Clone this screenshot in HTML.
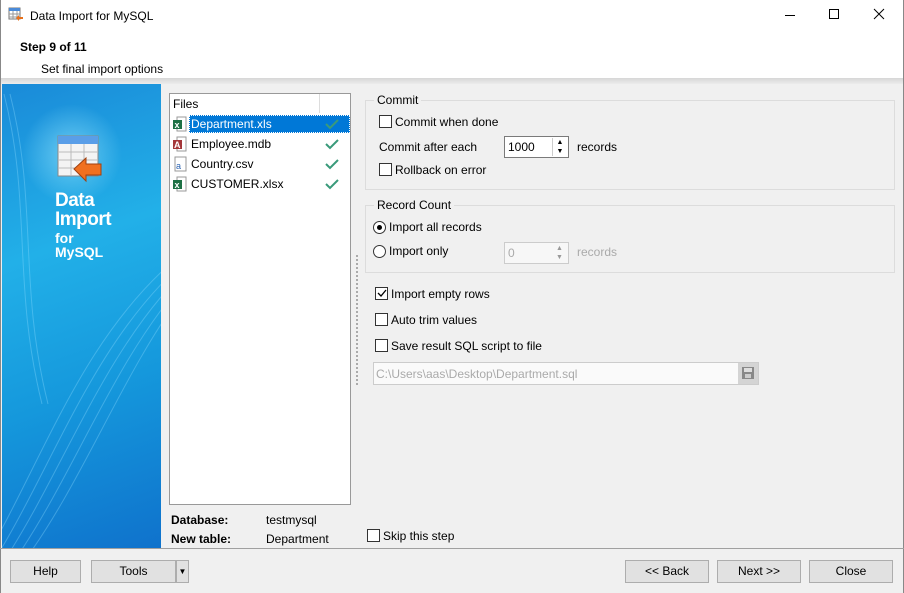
<!DOCTYPE html>
<html><head><style>
*{box-sizing:border-box;margin:0;padding:0}
body{width:904px;height:593px;overflow:hidden;background:#f0f0f0;font-family:"Liberation Sans",sans-serif;font-size:12px;color:#000;position:relative}
.a{position:absolute}
.cb{position:absolute;width:13px;height:13px;border:1px solid #333;background:#fff}
.rb{position:absolute;width:13px;height:13px;border:1px solid #333;border-radius:50%;background:#fff}
.btn{position:absolute;height:23px;border:1px solid #adadad;background:#e1e1e1;text-align:center;line-height:21px}
.grp{position:absolute;border:1px solid #dcdcdc}
.gl{position:absolute;background:#f0f0f0;padding:0 3px;top:-8px;left:8px}
</style></head><body>
<div class="a" style="left:0;top:0;width:904px;height:78px;background:#fff"></div>
<svg class="a" style="left:8px;top:7px" width="16" height="16"><rect x="1" y="1" width="11" height="11" fill="#fff" stroke="#777"/><rect x="1" y="1" width="11" height="3" fill="#4a8ad8"/><path d="M1 7h11M1 10h11M5 4v8M9 4v8" stroke="#999"/><path d="M8 11l3-3v2h4v2h-4v2z" fill="#e8701a"/></svg>
<div class="a" style="left:30px;top:9px;font-size:12px">Data Import for MySQL</div>
<div class="a" style="left:785px;top:15px;width:10px;height:1px;background:#000"></div>
<div class="a" style="left:829px;top:9px;width:10px;height:10px;border:1px solid #000"></div>
<svg class="a" style="left:873px;top:8px" width="12" height="12"><path d="M1 1l10 10M11 1L1 11" stroke="#000"/></svg>
<div class="a" style="left:20px;top:40px;font-weight:bold">Step 9 of 11</div>
<div class="a" style="left:41px;top:62px">Set final import options</div>
<div class="a" style="left:0;top:78px;width:904px;height:6px;background:linear-gradient(#d6d6d6,#ececec)"></div>
<div class="a" style="left:0;top:0;width:1px;height:593px;background:#888"></div>
<div class="a" style="left:903px;top:0;width:1px;height:593px;background:#888"></div>
<!-- banner -->
<div class="a" style="left:2px;top:84px;width:159px;height:464px;background:linear-gradient(160deg,#1a8ad8 0%,#22b0e8 35%,#1598dc 65%,#0f72cc 100%);overflow:hidden">
<div class="a" style="left:20px;top:20px;width:100px;height:100px;border-radius:50%;background:radial-gradient(closest-side,rgba(160,235,255,.6),rgba(160,235,255,0))"></div>
<svg width="159" height="464" style="position:absolute;left:0;top:0"><g fill="none" stroke="#8fdcff" stroke-opacity=".35"><path d="M-20 480C40 380 80 250 180 170"/><path d="M-10 480C50 385 90 260 180 180"/><path d="M0 480C60 390 100 270 180 190"/><path d="M10 480C70 395 110 280 180 200"/><path d="M20 480C80 400 120 290 180 210"/><path d="M2 10C30 120 10 200 40 320"/><path d="M8 10C36 120 16 200 46 320"/></g></svg>
<svg class="a" style="left:54px;top:50px" width="50" height="50"><rect x="2" y="2" width="40" height="40" fill="#f4f4f4" stroke="#888"/><rect x="2" y="2" width="40" height="8" fill="#5a9ee8"/><path d="M2 18h40M2 26h40M2 34h40M15 10v32M28 10v32" stroke="#bbb"/><path d="M18 35l12-11v6h15v11h-15v6z" fill="#f07020" stroke="#a04010"/></svg>
<div class="a" style="left:53px;top:107px;color:#fff;font-weight:bold;font-size:19px;line-height:19px;letter-spacing:-.5px">Data<br>Import</div>
<div class="a" style="left:53px;top:147px;color:#fff;font-weight:bold;font-size:14px;line-height:14px">for<br>MySQL</div>
</div>
<!-- files -->
<div class="a" style="left:169px;top:93px;width:182px;height:412px;background:#fff;border:1px solid #999"></div>
<div class="a" style="left:319px;top:94px;width:1px;height:19px;background:#ddd"></div>
<div class="a" style="left:173px;top:97px">Files</div>
<div class="a" style="left:189px;top:115px;width:161px;height:18px;background:#0078d7;outline:1px dotted #fff;outline-offset:-1px"></div>
<div class="a" style="left:191px;top:117px;color:#fff">Department.xls</div>
<div class="a" style="left:191px;top:137px">Employee.mdb</div>
<div class="a" style="left:191px;top:157px">Country.csv</div>
<div class="a" style="left:191px;top:177px">CUSTOMER.xlsx</div>
<svg class="a" style="left:172px;top:116px" width="16" height="80" font-family="Liberation Sans" font-size="9" font-weight="bold"><rect x="5" y="1" width="9" height="14" fill="#fff" stroke="#999"/><rect x="1" y="4" width="9" height="9" fill="#1e7145"/><text x="2.5" y="12" fill="#fff">x</text><rect x="5" y="21" width="9" height="14" fill="#fff" stroke="#999"/><rect x="1" y="24" width="9" height="9" fill="#a4373a"/><text x="2" y="32" fill="#fff">A</text><rect x="3" y="41" width="11" height="14" fill="#fff" stroke="#999"/><text x="4" y="53" fill="#2a62b0" font-weight="normal">a</text><rect x="5" y="61" width="9" height="14" fill="#fff" stroke="#999"/><rect x="1" y="64" width="9" height="9" fill="#1e7145"/><text x="2.5" y="72" fill="#fff">x</text></svg>
<svg class="a" style="left:324px;top:117px" width="16" height="80"><g fill="none" stroke="#3a9a7a" stroke-width="2"><path d="M2 7l4 4 8-8"/><path d="M2 27l4 4 8-8"/><path d="M2 47l4 4 8-8"/><path d="M2 67l4 4 8-8"/></g></svg>
<div class="a" style="left:171px;top:513px;font-weight:bold">Database:</div>
<div class="a" style="left:266px;top:513px">testmysql</div>
<div class="a" style="left:171px;top:532px;font-weight:bold">New table:</div>
<div class="a" style="left:266px;top:532px">Department</div>
<div class="cb" style="left:367px;top:529px"></div>
<div class="a" style="left:383px;top:529px">Skip this step</div>
<div class="a" style="left:356px;top:255px;width:2px;height:130px;border-left:2px dotted #aaa"></div>
<div class="grp" style="left:365px;top:100px;width:530px;height:90px"><div class="gl">Commit</div></div>
<div class="cb" style="left:379px;top:115px"></div><div class="a" style="left:395px;top:115px">Commit when done</div>
<div class="a" style="left:379px;top:140px">Commit after each</div>
<div class="a" style="left:504px;top:136px;width:65px;height:22px;border:1px solid #7a7a7a;background:#fff;padding:3px 0 0 3px">1000</div>
<div class="a" style="left:552px;top:138px;width:15px;height:18px;border-left:1px solid #ccc;font-size:7px;text-align:center;line-height:9px">▲<br>▼</div>
<div class="a" style="left:577px;top:140px">records</div>
<div class="cb" style="left:379px;top:163px"></div><div class="a" style="left:395px;top:163px">Rollback on error</div>
<div class="grp" style="left:365px;top:205px;width:530px;height:68px"><div class="gl">Record Count</div></div>
<div class="rb" style="left:373px;top:221px"></div><div class="a" style="left:377px;top:225px;width:5px;height:5px;border-radius:50%;background:#000"></div>
<div class="a" style="left:389px;top:220px">Import all records</div>
<div class="rb" style="left:373px;top:245px"></div><div class="a" style="left:389px;top:244px">Import only</div>
<div class="a" style="left:504px;top:242px;width:65px;height:22px;border:1px solid #ccc;background:#f7f7f7;padding:3px 0 0 3px;color:#aaa">0</div>
<div class="a" style="left:552px;top:244px;width:15px;height:18px;font-size:7px;text-align:center;line-height:9px;color:#999">▲<br>▼</div>
<div class="a" style="left:577px;top:245px;color:#aaa">records</div>
<div class="cb" style="left:375px;top:287px"></div>
<svg class="a" style="left:376px;top:288px" width="11" height="11"><path d="M2 5l3 3 5-6" fill="none" stroke="#000" stroke-width="1.3"/></svg>
<div class="a" style="left:391px;top:287px">Import empty rows</div>
<div class="cb" style="left:375px;top:313px"></div><div class="a" style="left:391px;top:313px">Auto trim values</div>
<div class="cb" style="left:375px;top:339px"></div><div class="a" style="left:391px;top:339px">Save result SQL script to file</div>
<div class="a" style="left:373px;top:362px;width:386px;height:23px;border:1px solid #ccc;background:#fafafa;color:#aaa;padding:4px 0 0 2px">C:\Users\aas\Desktop\Department.sql</div>
<div class="a" style="left:738px;top:363px;width:20px;height:21px;background:#d4d4d4"></div>
<svg class="a" style="left:741px;top:366px" width="14" height="14"><rect x="1" y="1" width="12" height="12" fill="#888"/><rect x="3" y="2" width="8" height="4" fill="#ddd"/><rect x="4" y="8" width="6" height="4" fill="#ccc"/></svg>
<div class="a" style="left:0;top:548px;width:904px;height:1px;background:#a0a0a0"></div>
<div class="btn" style="left:10px;top:560px;width:71px">Help</div>
<div class="btn" style="left:91px;top:560px;width:85px">Tools</div>
<div class="btn" style="left:176px;top:560px;width:13px;font-size:8px">▼</div>
<div class="btn" style="left:625px;top:560px;width:84px">&lt;&lt; Back</div>
<div class="btn" style="left:717px;top:560px;width:84px">Next &gt;&gt;</div>
<div class="btn" style="left:809px;top:560px;width:84px">Close</div>
</body></html>
